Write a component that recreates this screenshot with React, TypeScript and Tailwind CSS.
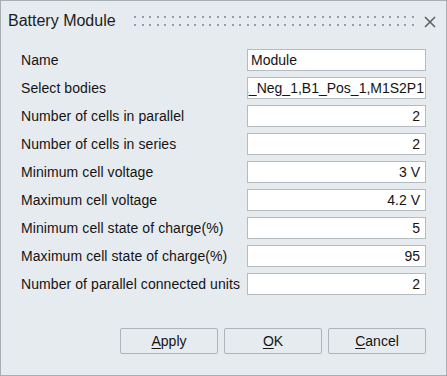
import React from "react";

const rows: { label: string; value: string; align: "left" | "right" | "end" }[] = [
  { label: "Name", value: "Module", align: "left" },
  { label: "Select bodies", value: "B1_Neg_1,B1_Pos_1,M1S2P1", align: "end" },
  { label: "Number of cells in parallel", value: "2", align: "right" },
  { label: "Number of cells in series", value: "2", align: "right" },
  { label: "Minimum cell voltage", value: "3 V", align: "right" },
  { label: "Maximum cell voltage", value: "4.2 V", align: "right" },
  { label: "Minimum cell state of charge(%)", value: "5", align: "right" },
  { label: "Maximum cell state of charge(%)", value: "95", align: "right" },
  { label: "Number of parallel connected units", value: "2", align: "right" },
];

function Grip() {
  const dots = Array.from({ length: 38 }, (_, i) => Math.round(i * 7.5));
  return (
    <svg width="282" height="12" className="block">
      {dots.map((x) => (
        <g key={x} fill="#979da2">
          <rect x={x} y={0} width={2} height={2} />
          <rect x={x} y={8} width={2} height={2} />
        </g>
      ))}
    </svg>
  );
}

function Field({ value, align }: { value: string; align: "left" | "right" | "end" }) {
  const justify =
    align === "left" ? "justify-start pl-[3px]" : align === "right" ? "justify-end pr-[5px]" : "justify-end pr-[1px]";
  return (
    <div
      className={`w-[179px] h-[22px] bg-white border border-[#b4bbc1] flex items-center overflow-hidden whitespace-nowrap text-[14px] text-[#141414] ${justify}`}
    >
      {value}
    </div>
  );
}

function Btn({ first, rest }: { first: string; rest: string }) {
  return (
    <button className="w-[98px] h-[26px] bg-[#e6ebef] border border-[#adb4ba] rounded-[2px] text-[14px] text-[#141414] flex items-center justify-center">
      <span className="underline underline-offset-2">{first}</span>
      {rest}
    </button>
  );
}

export default function App() {
  return (
    <div
      className="w-[447px] h-[376px] bg-[#e6ebef] border border-[#a7aeb4] flex flex-col"
      style={{ fontFamily: '"Liberation Sans", Arial, sans-serif' }}
    >
      {/* Title bar */}
      <div className="h-[40px] flex items-center pl-[7px] pr-[10px]">
        <span className="text-[16px] text-[#1a1d24]">Battery Module</span>
        <div className="ml-[18px] mt-[2px]">
          <Grip />
        </div>
        <svg width="12" height="12" viewBox="0 0 12 12" className="ml-auto mt-[1px]">
          <path d="M1 1 L11 11 M11 1 L1 11" stroke="#5a5e62" strokeWidth="1.5" />
        </svg>
      </div>

      {/* Form */}
      <div className="flex flex-col gap-[6px] pt-[8px] pl-[20px] pr-[20px]">
        {rows.map((r) => (
          <div key={r.label} className="flex items-center justify-between h-[22px]">
            <span className="text-[14px] tracking-[0.08px] text-[#141414]">{r.label}</span>
            <Field value={r.value} align={r.align} />
          </div>
        ))}
      </div>

      {/* Buttons */}
      <div className="flex justify-end gap-[6px] pr-[20px] mt-[33px]">
        <Btn first="A" rest="pply" />
        <Btn first="O" rest="K" />
        <Btn first="C" rest="ancel" />
      </div>
    </div>
  );
}
